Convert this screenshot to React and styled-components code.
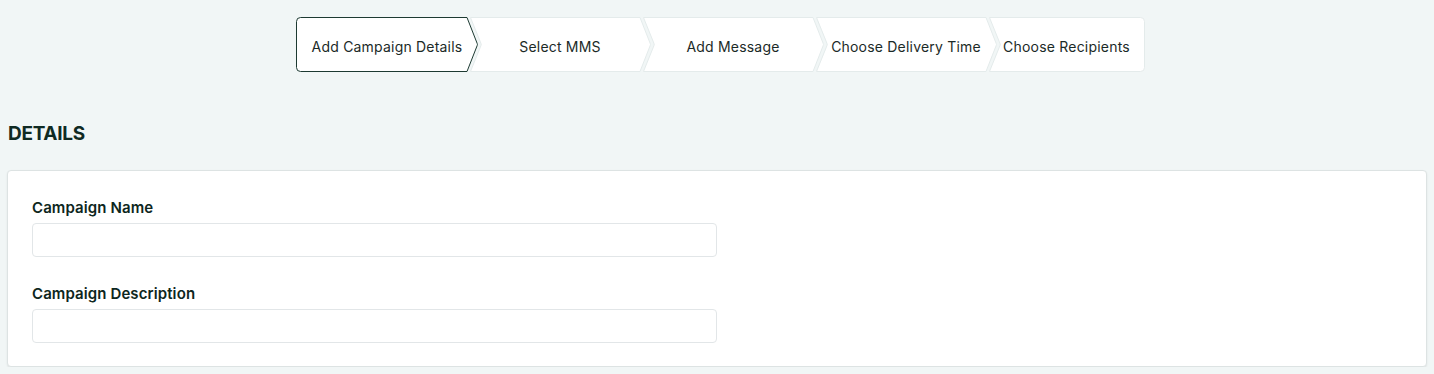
import React from 'react';
import styled, { createGlobalStyle } from 'styled-components';

const steps = [
  { text: 'Add Campaign Details', width: 182 },
  { text: 'Select MMS', width: 182 },
  { text: 'Add Message', width: 182 },
  { text: 'Choose Delivery Time', width: 182 },
  { text: 'Choose Recipients', width: 157 },
];

const H = 55;
const TIP = 12;

// chevron outline, first has no notch, last has no tip
const stepPath = (w, first, last) => {
  const h = H - 0.5;
  const m = H / 2;
  const r = 4;
  let d = '';
  if (first) {
    d += `M ${r + 0.5} 0.5`;
  } else {
    d += `M 1.5 0.5`;
  }
  if (last) {
    d += ` L ${w - r - 0.5} 0.5 Q ${w - 0.5} 0.5 ${w - 0.5} ${r + 0.5}`;
    d += ` L ${w - 0.5} ${h - r} Q ${w - 0.5} ${h} ${w - r - 0.5} ${h}`;
  } else {
    d += ` L ${w - TIP + 1} 0.5 L ${w - 0.8} ${m - 1} Q ${w - 0.3} ${m} ${w - 0.8} ${m + 1} L ${w - TIP + 1} ${h}`;
  }
  if (first) {
    d += ` L ${r + 0.5} ${h} Q 0.5 ${h} 0.5 ${h - r} L 0.5 ${r + 0.5} Q 0.5 0.5 ${r + 0.5} 0.5 Z`;
  } else {
    d += ` L 1.5 ${h} L ${TIP} ${m + 1} Q ${TIP + 0.5} ${m} ${TIP} ${m - 1} Z`;
  }
  return d;
};

const App = () => {
  const active = 0;
  return (
    <>
      <GlobalStyle />
      <Page>
        <Stepper>
          {steps.map((step, i) => (
            <Step key={step.text} width={step.width} first={i === 0}>
              <Shape width={step.width} height={H} viewBox={`0 0 ${step.width} ${H}`}>
                <path
                  d={stepPath(step.width, i === 0, i === steps.length - 1)}
                  fill="#ffffff"
                  stroke={i === active ? '#1d3a32' : '#e4ebeb'}
                  strokeWidth="1"
                />
              </Shape>
              <StepLabel>{step.text}</StepLabel>
            </Step>
          ))}
        </Stepper>

        <SectionTitle>DETAILS</SectionTitle>

        <Card>
          <Field>
            <Label>Campaign Name</Label>
            <Input type="text" />
          </Field>
          <Field>
            <Label>Campaign Description</Label>
            <Input type="text" />
          </Field>
        </Card>
      </Page>
    </>
  );
};

const GlobalStyle = createGlobalStyle`
  body {
    margin: 0;
    background: #f1f6f6;
    font-family: Inter, "Liberation Sans", sans-serif;
    color: #142a24;
  }
`;

const Page = styled.div`
  padding: 17px 7px 0 7px;
`;

const Stepper = styled.nav`
  display: flex;
  justify-content: center;
  padding-left: 7px;
`;

const Step = styled.div`
  position: relative;
  width: ${(props) => props.width}px;
  height: ${H}px;
  margin-left: ${(props) => (props.first ? 0 : -9)}px;
  display: flex;
  align-items: center;
  justify-content: center;
  flex-shrink: 0;
`;

const Shape = styled.svg`
  position: absolute;
  top: 0;
  left: 0;
`;

const StepLabel = styled.span`
  position: relative;
  font-size: 14px;
  color: #1b2a27;
  white-space: nowrap;
  padding-top: 3px;
  letter-spacing: 0.2px;
`;

const SectionTitle = styled.h2`
  margin: 51px 0 0 1px;
  font-size: 19px;
  font-weight: 700;
  line-height: 22px;
  color: #0f2a23;
  letter-spacing: -0.3px;
`;

const Card = styled.section`
  margin-top: 25px;
  background: #ffffff;
  border: 1px solid #dde3e3;
  border-radius: 4px;
  box-shadow: 0 1px 2px rgba(0, 0, 0, 0.08);
  padding: 27px 24px 23px 24px;
  display: flex;
  flex-direction: column;
  gap: 27px;
`;

const Field = styled.div`
  display: flex;
  flex-direction: column;
  gap: 5px;
`;

const Label = styled.label`
  font-size: 15px;
  font-weight: 600;
  line-height: 20px;
  color: #0d2620;
  letter-spacing: 0.1px;
`;

const Input = styled.input`
  width: 50%;
  height: 34px;
  box-sizing: border-box;
  border: 1px solid #e2e6e8;
  border-radius: 4px;
  background: #ffffff;
  font-family: inherit;
  font-size: 14px;
  padding: 0 10px;
  outline: none;
`;

export default App;
